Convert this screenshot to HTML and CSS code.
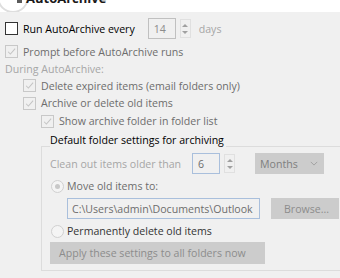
FILE: index.html
```html
<!DOCTYPE html>
<html>
<head>
<meta charset="utf-8">
<link rel="stylesheet" href="styles.css">
</head>
<body>
<div class="header">
  <div class="logo-circle"></div>
  <div class="title"><span class="title-icon"></span>AutoArchive</div>
</div>
<div class="panel">
  <div class="row row-first">
    <span class="cb"></span>
    <span class="lbl dark">Run AutoArchive every</span>
    <span class="spin-input w28">14</span>
    <span class="spin-btns"><i class="up"></i><i class="down"></i></span>
    <span class="lbl days">days</span>
  </div>
  <div class="row r17">
    <span class="cb dis checked"><svg viewBox="0 0 13 13"><path d="M2.5 6.8 L5.2 9.5 L10.8 3.2" /></svg></span>
    <span class="lbl grey">Prompt before AutoArchive runs</span>
  </div>
  <div class="row r17">
    <span class="lbl light">During AutoArchive:</span>
  </div>
  <div class="row r17 ind1">
    <span class="cb dis checked"><svg viewBox="0 0 13 13"><path d="M2.5 6.8 L5.2 9.5 L10.8 3.2" /></svg></span>
    <span class="lbl grey">Delete expired items (email folders only)</span>
  </div>
  <div class="row ind1">
    <span class="cb dis checked"><svg viewBox="0 0 13 13"><path d="M2.5 6.8 L5.2 9.5 L10.8 3.2" /></svg></span>
    <span class="lbl grey">Archive or delete old items</span>
  </div>
  <div class="row ind2">
    <span class="cb dis checked"><svg viewBox="0 0 13 13"><path d="M2.5 6.8 L5.2 9.5 L10.8 3.2" /></svg></span>
    <span class="lbl grey">Show archive folder in folder list</span>
  </div>
  <div class="group">
    <div class="legend"><span>Default folder settings for archiving</span></div>
    <div class="grow clean">
      <span class="lbl light">Clean out items older than</span>
      <span class="spin-input w28 blue">6</span>
      <span class="spin-btns"><i class="up"></i><i class="down"></i></span>
      <span class="select"><span>Months</span><svg viewBox="0 0 10 6"><path d="M1 1 L5 5 L9 1"/></svg></span>
    </div>
    <div class="grow radio-row">
      <span class="radio checked"><span class="dot"></span></span>
      <span class="lbl grey">Move old items to:</span>
    </div>
    <div class="grow path-row">
      <span class="path">C:\Users\admin\Documents\Outlook</span>
      <span class="btn browse">Browse...</span>
    </div>
    <div class="grow radio-row2">
      <span class="radio"></span>
      <span class="lbl dark2">Permanently delete old items</span>
    </div>
    <div class="grow apply-row">
      <span class="btn apply">Apply these settings to all folders now</span>
    </div>
  </div>
</div>
</body>
</html>
```
FILE: styles.css
```css
html, body {
  margin: 0;
  padding: 0;
}
body {
  width: 340px;
  height: 278px;
  overflow: hidden;
  background: #f0f0f0;
  font-family: "Open Sans", "Noto Sans", sans-serif;
  font-size: 10.6px;
  color: #000;
}
.header {
  position: relative;
  height: 12px;
  background: #ffffff;
  overflow: hidden;
}
.logo-circle {
  position: absolute;
  left: -3px;
  top: -19px;
  width: 28px;
  height: 28px;
  border-radius: 50%;
  border: 2px solid #dedede;
  background: #fff;
}
.title {
  position: absolute;
  left: 17px;
  top: -9px;
  font-weight: bold;
  font-size: 13px;
  line-height: 15px;
  color: #1a1a1a;
  display: flex;
  align-items: flex-start;
  gap: 4px;
}
.title-icon {
  display: inline-block;
  width: 5px;
  height: 12px;
  background: #5a5a5a;
}
.panel {
  padding: 5px 0 0 5px;
}
.row {
  display: flex;
  align-items: center;
  height: 18px;
}
.r17 { height: 17px; }
.row-first {
  height: 23px;
  margin-bottom: 3px;
}
.ind1 { padding-left: 18px; }
.ind2 { padding-left: 36px; }
.cb {
  flex: none;
  width: 11px;
  height: 11px;
  border: 1px solid #333;
  background: #fff;
  margin-right: 5px;
  display: inline-flex;
}
.cb.dis {
  border-color: #c8c8c8;
  background: #f0f0f0;
}
.cb svg {
  width: 11px;
  height: 11px;
}
.cb svg path {
  fill: none;
  stroke: #c4c4c4;
  stroke-width: 1.2;
}
.lbl { white-space: nowrap; }
.dark { color: #000; }
.dark2 { color: #333; }
.grey { color: #6d6d6d; }
.light { color: #a6a6a6; }
.spin-input {
  box-sizing: border-box;
  height: 21px;
  border: 1px solid #c0c0c0;
  background: #f0f0f0;
  color: #8c8c8c;
  padding-left: 5px;
  display: inline-flex;
  align-items: center;
  margin-left: 13px;
  flex: none;
}
.w28 { width: 28px; }
.spin-input.blue {
  border-color: #a9bfdc;
  color: #6d6d6d;
  margin-left: 11px;
}
.spin-btns {
  display: inline-flex;
  flex-direction: column;
  justify-content: center;
  width: 11px;
  height: 19px;
  margin-left: 4px;
  border: 1px solid #e0e0e0;
  box-sizing: border-box;
  align-items: center;
  gap: 4px;
  flex: none;
}
.spin-btns i {
  display: block;
  width: 0;
  height: 0;
  border-left: 3px solid transparent;
  border-right: 3px solid transparent;
}
.spin-btns .up { border-bottom: 3px solid #a0a0a0; }
.spin-btns .down { border-top: 3px solid #a0a0a0; }
.days { margin-left: 8px; color: #a6a6a6; }
.group {
  margin-left: 36px;
  width: 320px;
  position: relative;
  padding-top: 2px;
}
.group::before {
  content: "";
  position: absolute;
  left: 0;
  top: 16px;
  right: 0;
  height: 123px;
  border: 1px solid #dcdcdc;
  border-right: none;
}
.legend {
  position: relative;
  padding-left: 9px;
  height: 16px;
  line-height: 16px;
  color: #000;
  display: flex;
}
.legend span {
  background: #f0f0f0;
  padding-right: 2px;
}
.grow {
  display: flex;
  align-items: center;
  padding-left: 9px;
  position: relative;
}
.clean {
  height: 21px;
  margin-top: 5px;
}
.select {
  box-sizing: border-box;
  margin-left: 20px;
  width: 69px;
  height: 21px;
  background: #cccccc;
  color: #7f7f7f;
  display: inline-flex;
  align-items: center;
  justify-content: space-between;
  padding: 0 6px 0 5px;
  flex: none;
}
.select svg {
  width: 8px;
  height: 5px;
}
.select svg path {
  fill: none;
  stroke: #a0a0a0;
  stroke-width: 1.2;
}
.radio-row {
  height: 18px;
  margin-top: 3px;
  padding-left: 10px;
}
.radio {
  box-sizing: border-box;
  flex: none;
  width: 13px;
  height: 13px;
  border-radius: 50%;
  border: 1px solid #d0d0d0;
  background: #f4f4f4;
  margin-right: 3px;
  display: inline-flex;
  align-items: center;
  justify-content: center;
}
.radio .dot {
  width: 5px;
  height: 5px;
  border-radius: 50%;
  background: #c8c8c8;
}
.path-row {
  margin-top: 3px;
  padding-left: 26px;
  height: 21px;
}
.path {
  box-sizing: border-box;
  flex: none;
  width: 193px;
  height: 21px;
  border: 1px solid #a9bfdc;
  background: #f0f0f0;
  color: #6d6d6d;
  padding-left: 4px;
  display: inline-flex;
  align-items: center;
  white-space: nowrap;
  overflow: hidden;
}
.btn {
  box-sizing: border-box;
  background: #cccccc;
  color: #8c8c8c;
  display: inline-flex;
  align-items: center;
  white-space: nowrap;
  height: 21px;
  flex: none;
}
.browse {
  margin-left: 11px;
  width: 68px;
  padding-left: 13px;
}
.radio-row2 {
  height: 18px;
  margin-top: 3px;
  padding-left: 10px;
}
.apply-row {
  margin-top: 2px;
}
.apply {
  width: 215px;
  height: 22px;
  padding-left: 9px;
}
```
